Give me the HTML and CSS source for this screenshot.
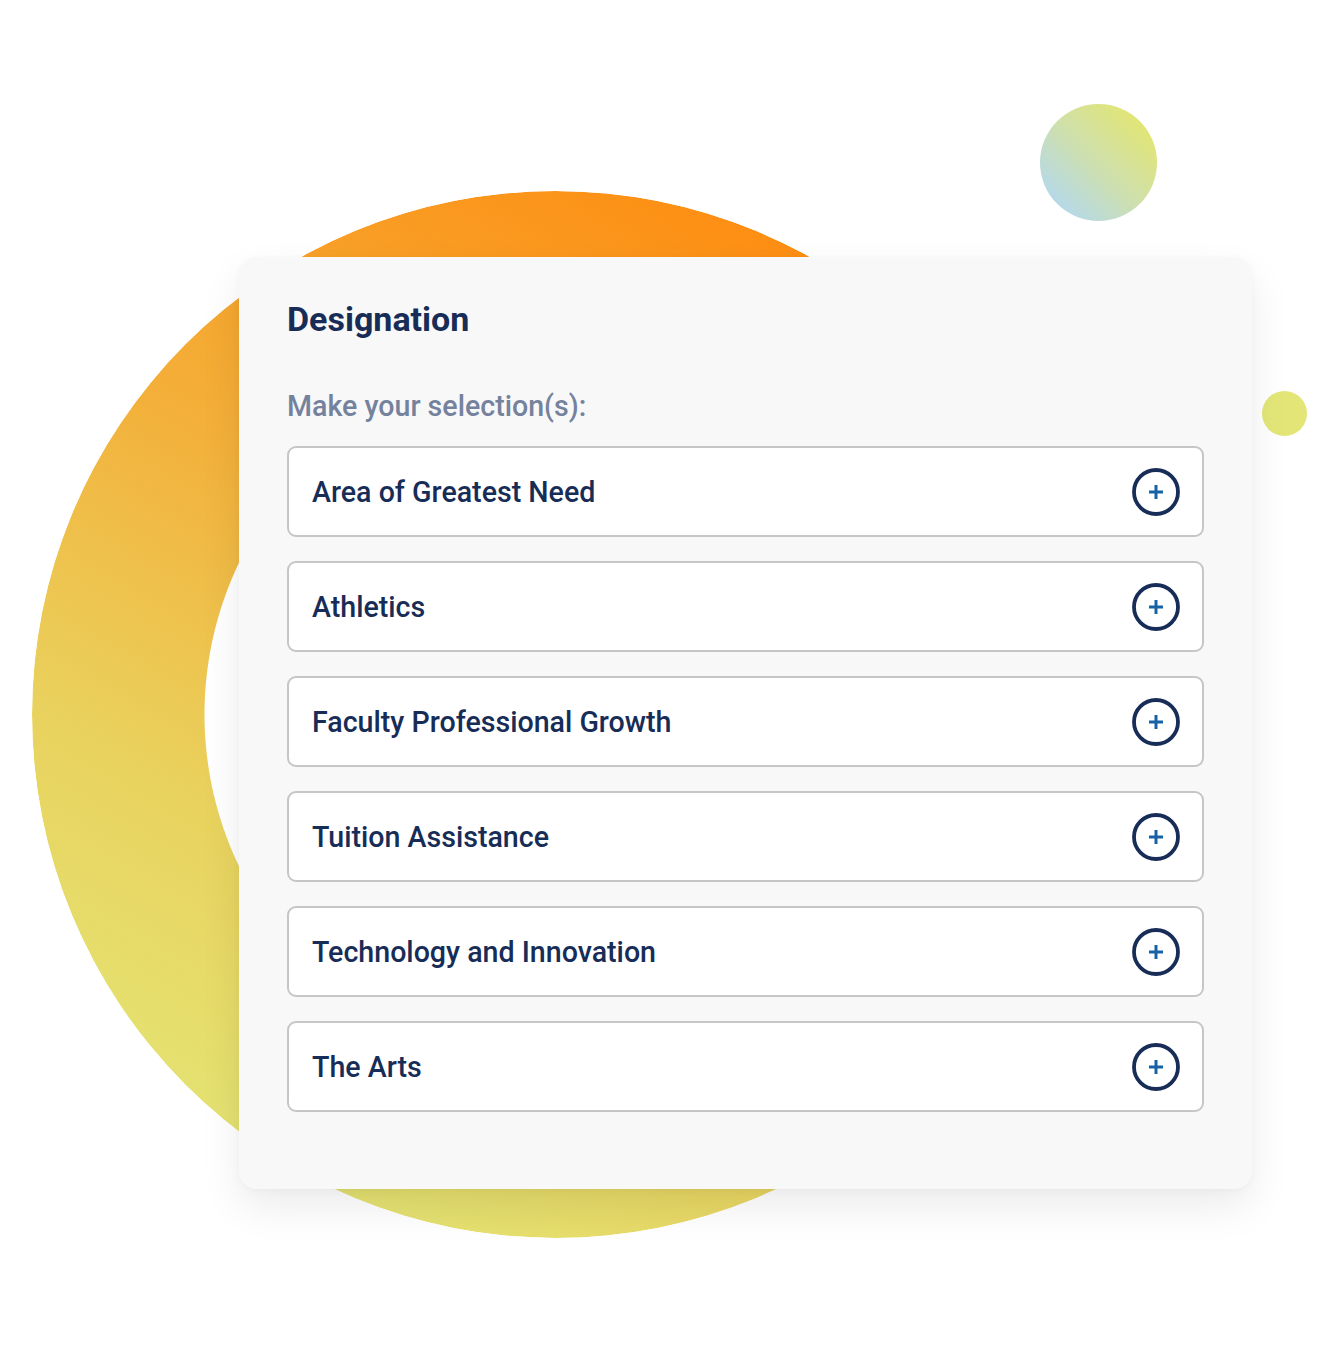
FILE: index.html
```html
<!DOCTYPE html>
<html lang="en">
<head>
<meta charset="utf-8">
<title>Designation</title>
<link rel="stylesheet" href="styles.css">
</head>
<body>
<div class="stage">
  <div class="ring"></div>
  <div class="bubble"></div>
  <div class="dot"></div>
  <section class="card">
    <h2 class="title">Designation</h2>
    <p class="subtitle">Make your selection(s):</p>
    <ul class="options">
      <li class="option"><span class="label">Area of Greatest Need</span><svg class="plus" viewBox="0 0 48 48"><circle cx="24" cy="24" r="22"/><path d="M17 24h14M24 17v14"/></svg></li>
      <li class="option"><span class="label">Athletics</span><svg class="plus" viewBox="0 0 48 48"><circle cx="24" cy="24" r="22"/><path d="M17 24h14M24 17v14"/></svg></li>
      <li class="option"><span class="label">Faculty Professional Growth</span><svg class="plus" viewBox="0 0 48 48"><circle cx="24" cy="24" r="22"/><path d="M17 24h14M24 17v14"/></svg></li>
      <li class="option"><span class="label">Tuition Assistance</span><svg class="plus" viewBox="0 0 48 48"><circle cx="24" cy="24" r="22"/><path d="M17 24h14M24 17v14"/></svg></li>
      <li class="option"><span class="label">Technology and Innovation</span><svg class="plus" viewBox="0 0 48 48"><circle cx="24" cy="24" r="22"/><path d="M17 24h14M24 17v14"/></svg></li>
      <li class="option"><span class="label">The Arts</span><svg class="plus" viewBox="0 0 48 48"><circle cx="24" cy="24" r="22"/><path d="M17 24h14M24 17v14"/></svg></li>
    </ul>
  </section>
</div>
</body>
</html>
```

FILE: styles.css
```css
* { box-sizing: border-box; }
html, body {
  margin: 0;
  padding: 0;
  background: #ffffff;
  font-family: Roboto, "Liberation Sans", Arial, sans-serif;
}
.stage {
  position: relative;
  width: 1344px;
  height: 1368px;
  overflow: hidden;
  padding-top: 257px;
  padding-left: 239px;
}
.ring {
  position: absolute;
  left: 32px;
  top: 191px;
  width: 1047px;
  height: 1047px;
  border-radius: 50%;
  background: linear-gradient(210deg, #fe8d12 12%, #f3b03a 45%, #e9d25e 68%, #e4e373 88%);
  -webkit-mask: radial-gradient(circle closest-side, transparent 350.5px, #000 351.5px);
  mask: radial-gradient(circle closest-side, transparent 350.5px, #000 351.5px);
}
.bubble {
  position: absolute;
  left: 1040px;
  top: 104px;
  width: 117px;
  height: 117px;
  border-radius: 50%;
  background: linear-gradient(45deg, #b2d8f0 10%, #cfe0ab 50%, #e4e66f 90%);
}
.dot {
  position: absolute;
  left: 1262px;
  top: 391px;
  width: 45px;
  height: 45px;
  border-radius: 50%;
  background: #e3e677;
}
.card {
  position: relative;
  width: 1013px;
  height: 932px;
  background: #f8f8f8;
  border-radius: 18px;
  box-shadow: 0 18px 40px rgba(0, 0, 0, 0.08), 0 2px 8px rgba(0, 0, 0, 0.03);
  padding: 42px 48px 0 48px;
}
.title {
  margin: 0;
  font-size: 34px;
  line-height: 40px;
  font-weight: 700;
  color: #172d57;
}
.subtitle {
  margin: 50px 0 0 0;
  font-size: 28.6px;
  line-height: 34px;
  font-weight: 500;
  color: #75829d;
}
.options {
  list-style: none;
  margin: 23px 0 0 0;
  padding: 0;
  display: flex;
  flex-direction: column;
  gap: 24px;
}
.option {
  height: 91px;
  background: #ffffff;
  border: 2px solid #c6c6c6;
  border-radius: 9px;
  display: flex;
  align-items: center;
  justify-content: space-between;
  padding: 0 22px 0 23px;
}
.label {
  font-size: 28.6px;
  font-weight: 500;
  color: #172d57;
  line-height: 34px;
}
.plus {
  width: 48px;
  height: 48px;
  flex: none;
}
.plus circle {
  fill: none;
  stroke: #172d57;
  stroke-width: 3.8;
}
.plus path {
  fill: none;
  stroke: #1762a6;
  stroke-width: 3;
}
```
